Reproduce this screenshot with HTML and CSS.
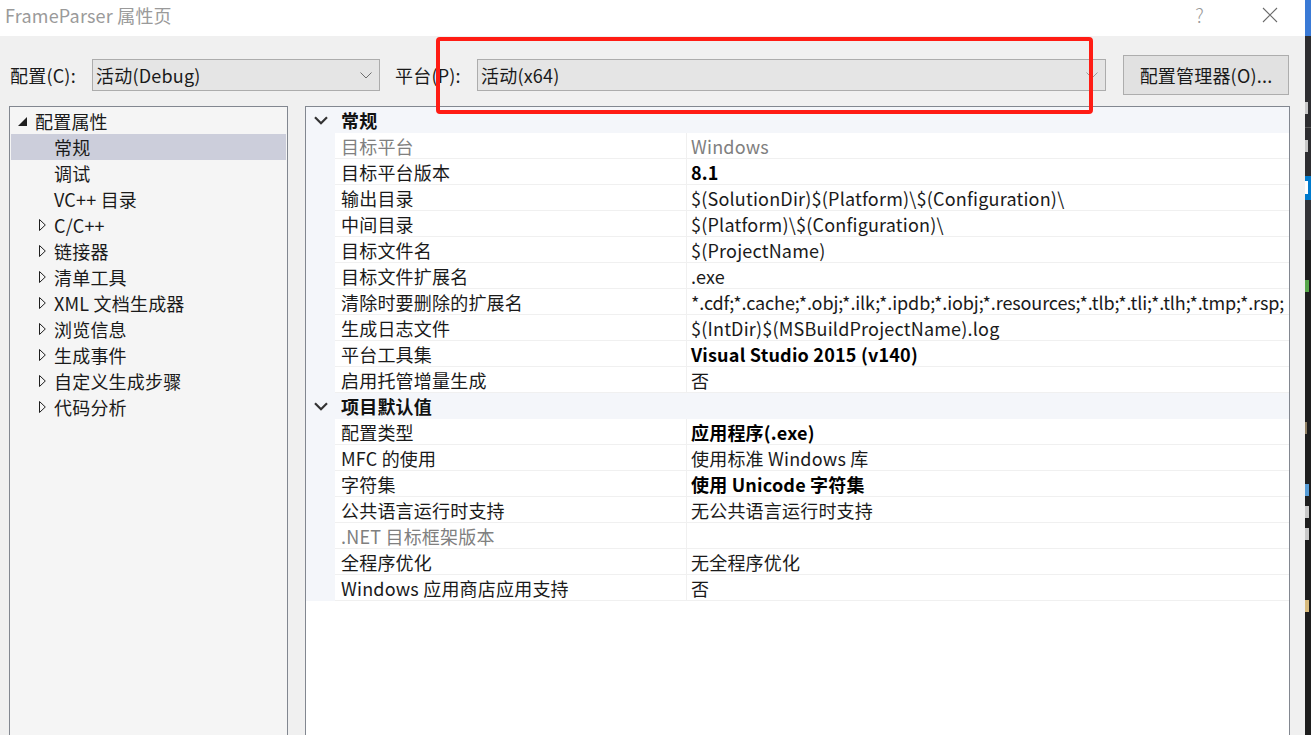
FILE: index.html
```html
<!DOCTYPE html>
<html lang="zh-CN">
<head>
<meta charset="utf-8">
<title>FrameParser 属性页</title>
<link rel="stylesheet" href="styles.css">
</head>
<body>
<div class="window">
  <div class="dialog">
    <div class="titlebar">
      <span class="title">FrameParser 属性页</span>
      <span class="tb-spacer"></span>
      <span class="help">?</span>
      <span class="close">
        <svg width="16" height="16" viewBox="0 0 16 16"><path d="M1 1 L15 15 M15 1 L1 15" stroke="#6b6b6b" stroke-width="1.1" fill="none"/></svg>
      </span>
    </div>

    <div class="toolbar">
      <span class="lbl lbl-config">配置(C):</span>
      <div class="combo combo-config">
        <span class="combo-text">活动(Debug)</span>
        <svg class="chev" width="12" height="7" viewBox="0 0 12 7"><polyline points="0.5,0.5 6,6 11.5,0.5" stroke="#6d6d6d" stroke-width="1" fill="none"/></svg>
      </div>
      <span class="lbl lbl-platform">平台(P):</span>
      <div class="combo combo-platform">
        <span class="combo-text">活动(x64)</span>
        <svg class="chev" width="12" height="7" viewBox="0 0 12 7"><polyline points="0.5,0.5 6,6 11.5,0.5" stroke="#9a9a9a" stroke-width="1" fill="none"/></svg>
      </div>
      <button class="btn">配置管理器(O)...</button>
      <div class="annot"></div>
    </div>

    <div class="main">
      <div class="tree">
        <div class="tnode lvl0">
          <svg class="tri" width="9" height="9" viewBox="0 0 9 9"><polygon points="9,0 9,9 0,9" fill="#1e1e1e"/></svg>
          <span>配置属性</span>
        </div>
        <div class="tnode lvl1 sel"><span class="noarrow"></span><span>常规</span></div>
        <div class="tnode lvl1"><span class="noarrow"></span><span>调试</span></div>
        <div class="tnode lvl1"><span class="noarrow"></span><span>VC++ 目录</span></div>
        <div class="tnode lvl1"><svg class="arrow" width="7" height="12" viewBox="0 0 7 12"><polygon points="0.5,0.5 6.3,6 0.5,11.5" stroke="#1e1e1e" stroke-width="1" fill="none"/></svg><span>C/C++</span></div>
        <div class="tnode lvl1"><svg class="arrow" width="7" height="12" viewBox="0 0 7 12"><polygon points="0.5,0.5 6.3,6 0.5,11.5" stroke="#1e1e1e" stroke-width="1" fill="none"/></svg><span>链接器</span></div>
        <div class="tnode lvl1"><svg class="arrow" width="7" height="12" viewBox="0 0 7 12"><polygon points="0.5,0.5 6.3,6 0.5,11.5" stroke="#1e1e1e" stroke-width="1" fill="none"/></svg><span>清单工具</span></div>
        <div class="tnode lvl1"><svg class="arrow" width="7" height="12" viewBox="0 0 7 12"><polygon points="0.5,0.5 6.3,6 0.5,11.5" stroke="#1e1e1e" stroke-width="1" fill="none"/></svg><span>XML 文档生成器</span></div>
        <div class="tnode lvl1"><svg class="arrow" width="7" height="12" viewBox="0 0 7 12"><polygon points="0.5,0.5 6.3,6 0.5,11.5" stroke="#1e1e1e" stroke-width="1" fill="none"/></svg><span>浏览信息</span></div>
        <div class="tnode lvl1"><svg class="arrow" width="7" height="12" viewBox="0 0 7 12"><polygon points="0.5,0.5 6.3,6 0.5,11.5" stroke="#1e1e1e" stroke-width="1" fill="none"/></svg><span>生成事件</span></div>
        <div class="tnode lvl1"><svg class="arrow" width="7" height="12" viewBox="0 0 7 12"><polygon points="0.5,0.5 6.3,6 0.5,11.5" stroke="#1e1e1e" stroke-width="1" fill="none"/></svg><span>自定义生成步骤</span></div>
        <div class="tnode lvl1"><svg class="arrow" width="7" height="12" viewBox="0 0 7 12"><polygon points="0.5,0.5 6.3,6 0.5,11.5" stroke="#1e1e1e" stroke-width="1" fill="none"/></svg><span>代码分析</span></div>
      </div>

      <div class="grid">
        <div class="cat">
          <span class="gut"><svg width="14" height="9" viewBox="0 0 14 9"><polyline points="1,1.2 7,7.2 13,1.2" stroke="#333" stroke-width="2.2" fill="none"/></svg></span>
          <span class="cat-name">常规</span>
        </div>
        <div class="prop"><span class="gut"></span><span class="pn dim">目标平台</span><span class="pv dim">Windows</span></div>
        <div class="prop"><span class="gut"></span><span class="pn">目标平台版本</span><span class="pv b">8.1</span></div>
        <div class="prop"><span class="gut"></span><span class="pn">输出目录</span><span class="pv">$(SolutionDir)$(Platform)\$(Configuration)\</span></div>
        <div class="prop"><span class="gut"></span><span class="pn">中间目录</span><span class="pv">$(Platform)\$(Configuration)\</span></div>
        <div class="prop"><span class="gut"></span><span class="pn">目标文件名</span><span class="pv">$(ProjectName)</span></div>
        <div class="prop"><span class="gut"></span><span class="pn">目标文件扩展名</span><span class="pv">.exe</span></div>
        <div class="prop"><span class="gut"></span><span class="pn">清除时要删除的扩展名</span><span class="pv tight">*.cdf;*.cache;*.obj;*.ilk;*.ipdb;*.iobj;*.resources;*.tlb;*.tli;*.tlh;*.tmp;*.rsp;</span></div>
        <div class="prop"><span class="gut"></span><span class="pn">生成日志文件</span><span class="pv">$(IntDir)$(MSBuildProjectName).log</span></div>
        <div class="prop"><span class="gut"></span><span class="pn">平台工具集</span><span class="pv b">Visual Studio 2015 (v140)</span></div>
        <div class="prop"><span class="gut"></span><span class="pn">启用托管增量生成</span><span class="pv">否</span></div>
        <div class="cat">
          <span class="gut"><svg width="14" height="9" viewBox="0 0 14 9"><polyline points="1,1.2 7,7.2 13,1.2" stroke="#333" stroke-width="2.2" fill="none"/></svg></span>
          <span class="cat-name">项目默认值</span>
        </div>
        <div class="prop"><span class="gut"></span><span class="pn">配置类型</span><span class="pv b">应用程序(.exe)</span></div>
        <div class="prop"><span class="gut"></span><span class="pn">MFC 的使用</span><span class="pv">使用标准 Windows 库</span></div>
        <div class="prop"><span class="gut"></span><span class="pn">字符集</span><span class="pv b">使用 Unicode 字符集</span></div>
        <div class="prop"><span class="gut"></span><span class="pn">公共语言运行时支持</span><span class="pv">无公共语言运行时支持</span></div>
        <div class="prop"><span class="gut"></span><span class="pn dim">.NET 目标框架版本</span><span class="pv"></span></div>
        <div class="prop"><span class="gut"></span><span class="pn">全程序优化</span><span class="pv">无全程序优化</span></div>
        <div class="prop"><span class="gut"></span><span class="pn">Windows 应用商店应用支持</span><span class="pv">否</span></div>
      </div>
    </div>
  </div>

  <div class="behind">
    <div class="bh bh-blue"></div>
    <div class="bh bh-dark1"></div>
    <div class="bh bh-txt1"><i class="mk mk-light"></i></div>
    <div class="bh bh-line"></div>
    <div class="bh bh-txt2"><i class="mk mk-light"></i></div>
    <div class="bh bh-dark2"></div>
    <div class="bh bh-sel"><i class="mk mk-white"></i></div>
    <div class="bh bh-dark3"></div>
    <div class="bh bh-code">
      <i class="mk mk-green"></i>
      <i class="mk mk-tan"></i>
      <i class="mk mk-blue"></i>
      <i class="mk mk-gray"></i>
      <i class="mk mk-gray"></i>
      <i class="mk mk-yellow"></i>
    </div>
  </div>
</div>
</body>
</html>
```

FILE: styles.css
```css
* { box-sizing: border-box; }

html, body {
  margin: 0;
  padding: 0;
  width: 1311px;
  height: 735px;
  overflow: hidden;
  background: #1e1e1e;
}

body {
  font-family: "Noto Sans CJK SC", "Noto Sans", sans-serif;
  font-size: 18px;
  letter-spacing: 0.2px;
  color: #1a1a1a;
}

.window {
  display: flex;
  width: 1311px;
  height: 735px;
}

.dialog {
  width: 1305px;
  height: 770px;
  background: #f0f0f0;
  display: flex;
  flex-direction: column;
  flex: none;
}

/* title bar */
.titlebar {
  height: 36px;
  background: #ffffff;
  display: flex;
  align-items: center;
  padding-left: 5px;
  flex: none;
}
.title {
  color: #9a9a9a;
  font-size: 18px;
  line-height: 20px;
  margin-top: -6px;
}
.tb-spacer { flex: 1; }
.help {
  color: #9a9a9a;
  font-size: 19px;
  font-weight: 300;
  margin-right: 58px;
  margin-top: -7px;
}
.close {
  display: flex;
  margin-right: 27px;
  margin-top: -7px;
}

/* toolbar */
.toolbar {
  position: relative;
  height: 70px;
  flex: none;
  display: flex;
  align-items: center;
  padding: 8px 0 0 10px;
}
.lbl {
  flex: none;
  line-height: 20px;
  color: #1a1a1a;
}
.lbl-config { width: 82px; }
.lbl-platform { width: 82px; margin-left: 15px; }

.combo {
  flex: none;
  height: 32px;
  background: #e5e5e5;
  border: 1px solid #acacac;
  display: flex;
  align-items: center;
  padding: 0 7px 0 3px;
}
.combo-config { width: 288px; }
.combo-platform { width: 629px; }
.combo-text { flex: 1; line-height: 20px; }
.chev { flex: none; }

.btn {
  flex: none;
  margin-left: 17px;
  width: 166px;
  height: 40px;
  background: #e1e1e1;
  border: 1px solid #adadad;
  font-family: inherit;
  font-size: 18px;
  letter-spacing: 0.2px;
  color: #1a1a1a;
  padding: 0;
}

.annot {
  position: absolute;
  left: 436px;
  top: 1px;
  width: 657px;
  height: 77px;
  border: 4px solid #ff1c14;
  border-radius: 4px;
}

/* main area */
.main {
  flex: 1;
  display: flex;
  padding-left: 9px;
  gap: 17px;
}

.tree {
  width: 279px;
  background: #f5f5f5;
  border: 1px solid #828790;
  padding: 1px 0 0 0;
}
.tnode {
  height: 26px;
  display: flex;
  align-items: center;
  white-space: nowrap;
  color: #1a1a1a;
}
.tnode.lvl0 { padding-left: 8px; }
.tnode.lvl0 .tri { margin-right: 8px; margin-top: 1px; }
.tnode.lvl1 { padding-left: 29px; }
.tnode .arrow, .tnode .noarrow { width: 7px; flex: none; margin-right: 8px; }
.tnode .noarrow { display: inline-block; height: 1px; }
.tnode.sel {
  background: #cccedb;
  margin: 0 1px;
  padding-left: 28px;
}

.grid {
  width: 985px;
  background: #ffffff;
  border: 1px solid #828790;
  align-self: stretch;
}
.cat, .prop {
  height: 26px;
  display: flex;
  white-space: nowrap;
}
.cat {
  background: #f4f6fa;
  align-items: center;
}
.gut {
  width: 29px;
  flex: none;
  display: flex;
  align-items: center;
  justify-content: center;
  background: #f4f6fa;
  height: 26px;
}
.cat-name {
  font-weight: bold;
  padding-left: 6px;
  color: #111;
}
.pn, .pv {
  height: 26px;
  padding-top: 1px;
  line-height: 25px;
  border-bottom: 1px solid #f0f0f0;
  overflow: hidden;
}
.pn {
  width: 352px;
  flex: none;
  padding-left: 6px;
  border-right: 1px solid #f0f0f0;
}
.pv {
  flex: 1;
  min-width: 0;
  padding-left: 4px;
}
.pv.tight { letter-spacing: -0.12px; }
.b { font-weight: bold; color: #000; }
.dim { color: #808080; }

/* background window strip */
.behind {
  width: 6px;
  flex: none;
  display: flex;
  flex-direction: column;
  overflow: hidden;
  background: #1e1e1e;
}
.bh { flex: none; overflow: hidden; display: flex; flex-direction: column; }
.bh-blue { height: 36px; background: #3a7ad6; }
.bh-dark1 { height: 60px; background: #2d2d30; }
.bh-txt1 { height: 32px; background: #2d2d30; border-bottom: 1px solid #555; padding-top: 6px; }
.bh-line { height: 4px; background: #2d2d30; }
.bh-txt2 { height: 30px; background: #2d2d30; padding-top: 8px; }
.bh-dark2 { height: 14px; background: #2d2d30; }
.bh-sel { height: 24px; background: #007acc; padding-top: 5px; }
.bh-dark3 { height: 40px; background: #333337; }
.bh-code { flex: 1; padding-top: 40px; }
.mk { display: block; width: 4px; height: 12px; flex: none; }
.mk-light { background: #c8c8c8; width: 3px; }
.mk-white { background: #ffffff; width: 3px; height: 13px; }
.mk-green { background: #57a64a; margin-bottom: 10px; }
.mk-tan { background: #8f7f63; margin-top: 120px; width: 2px; }
.mk-blue { background: #569cd6; margin-top: 50px; }
.mk-gray { background: #c8c8c8; margin-top: 10px; }
.mk-yellow { background: #d7ba7d; margin-top: 60px; }
```
